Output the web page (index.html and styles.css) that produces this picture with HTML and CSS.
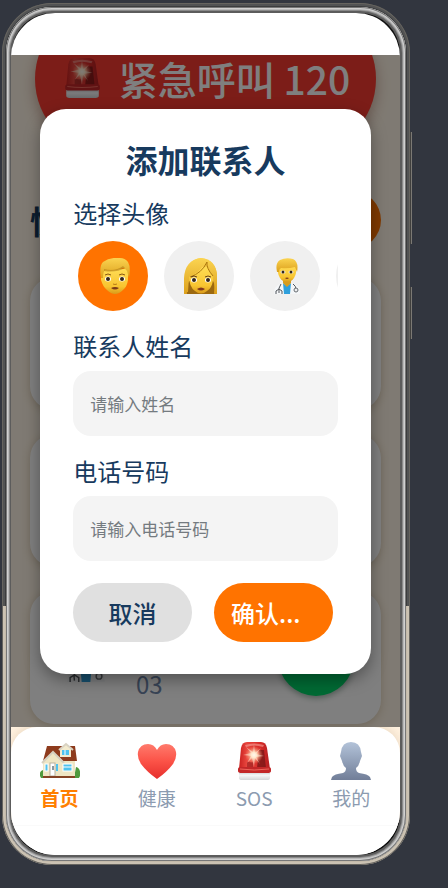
FILE: index.html
```
<!DOCTYPE html>
<html lang="zh-CN">
<head>
    <meta charset="UTF-8">
    <meta name="viewport" content="width=device-width, initial-scale=1.0">
    <title>添加联系人</title>
    <link rel="stylesheet" href="styles.css">
</head>
<body>
    <!-- Shared icons -->
    <svg class="sprite" aria-hidden="true">
        <defs>
            <linearGradient id="gRed" x1="0" x2="1" y1="0" y2="0">
                <stop offset="0" stop-color="#c9201f"/>
                <stop offset="0.25" stop-color="#e8463e"/>
                <stop offset="0.7" stop-color="#d62a27"/>
                <stop offset="1" stop-color="#b31f22"/>
            </linearGradient>
            <radialGradient id="gGlow">
                <stop offset="0" stop-color="#ffffff"/>
                <stop offset="0.3" stop-color="#ffe0c0"/>
                <stop offset="1" stop-color="#ff8a66" stop-opacity="0"/>
            </radialGradient>
            <linearGradient id="gBase" x1="0" x2="0" y1="0" y2="1">
                <stop offset="0" stop-color="#c9cccf"/>
                <stop offset="0.4" stop-color="#f6f7f8"/>
                <stop offset="1" stop-color="#d4d6d8"/>
            </linearGradient>
            <linearGradient id="gHair" x1="0" x2="0" y1="0" y2="1">
                <stop offset="0" stop-color="#fbd451"/>
                <stop offset="1" stop-color="#dca01c"/>
            </linearGradient>
            <linearGradient id="gFace" x1="0" x2="0" y1="0" y2="1">
                <stop offset="0" stop-color="#ffdc55"/>
                <stop offset="0.7" stop-color="#f8c531"/>
                <stop offset="1" stop-color="#d99a1b"/>
            </linearGradient>
            <linearGradient id="gHeart" x1="0" x2="0" y1="0" y2="1">
                <stop offset="0" stop-color="#ff7a6c"/>
                <stop offset="0.5" stop-color="#fb5247"/>
                <stop offset="1" stop-color="#e62f2d"/>
            </linearGradient>
            <linearGradient id="gUser" x1="0" x2="0" y1="0" y2="1">
                <stop offset="0" stop-color="#b3c3d9"/>
                <stop offset="1" stop-color="#717e98"/>
            </linearGradient>
        </defs>

        <symbol id="siren" viewBox="0 0 40 40">
            <path d="M5 28 7 7Q8 1 13 1h14q5 0 6 6l3 21z" fill="url(#gRed)"/>
            <path d="M25 9h5l2 18h-9z" fill="#6f1516" opacity="0.7"/>
            <path d="M13 27v-6h6v6z" fill="#84191a" opacity="0.5"/>
            <path d="M11 4Q20 1 30 4l-1 2Q20 3 12 6z" fill="#f5a198" opacity="0.6"/>
            <circle cx="20" cy="14" r="9" fill="url(#gGlow)"/>
            <path d="m20 3 1 9 6-5-5 6 8 2-8 1 4 7-5-6-1 9-2-9-5 5 4-7-8-1 8-2-5-6 7 5z" fill="#fff2dc" opacity="0.5"/>
            <path d="M5 31h31v6q0 2-3 2H8q-3 0-3-2z" fill="url(#gBase)"/>
            <path d="M4 28q0-2 3-2h27q3 0 3 2v2q0 2-4 2H8q-4 0-4-2z" fill="#c32728"/>
            <path d="M6 28q14 2 29 0" stroke="#ee665c" fill="none"/>
        </symbol>

        <symbol id="man" viewBox="0 0 36 36">
            <path d="M4 11h27v11q-1 7-5 10-4 4-8 4t-8-4q-4-3-6-10z" fill="url(#gFace)"/>
            <path d="M4 20Q2 8 6 4q7-5 17-4 5 0 8 4 3 5 1 16l-2-7q-1-2-4-3-9 4-18 2-2 2-2 8z" fill="url(#gHair)"/>
            <path d="M7 11q11 3 19-3l2 2q-9 5-21 3z" fill="#a87210" opacity="0.5"/>
            <path d="M8 17q3-2 6 0M22 17q3-2 6 0" stroke="#8a5a14" fill="none"/>
            <ellipse cx="11" cy="21" rx="3" ry="2.500" fill="#fff"/>
            <ellipse cx="25" cy="21" rx="3" ry="2.500" fill="#fff"/>
            <circle cx="11" cy="21" r="2" fill="#33261b"/>
            <circle cx="25" cy="21" r="2" fill="#33261b"/>
            <path d="M16 26q2 1 4 0" stroke="#b97c14" fill="none"/>
            <path d="M14 30q4-2 8 0-4 3-8 0z" fill="#7a3a17"/>
        </symbol>

        <symbol id="woman" viewBox="0 0 36 36">
            <path d="M1 36V20Q2 2 18 0q15 1 16 18v18z" fill="url(#gHair)"/>
            <path d="M4 36q-1-8 2-13h24q3 5 2 13z" fill="#9c6910"/>
            <path d="M6 17q5-1 12-8 5-1 7 1 5 4 5 12-1 8-6 11-6 5-12 0-6-4-6-16z" fill="url(#gFace)"/>
            <path d="M6 19Q18 14 23 3q-1 5 7 15 2 4 1 18l3-1V16Q32 2 18 0 5 1 3 16L1 35l4-1z" fill="url(#gHair)"/>
            <path d="M7 19Q19 15 24 4q-1 6 6 14" stroke="#ae780f" fill="none"/>
            <path d="M8 19q3-2 6 0M22 19q3-2 6 0" stroke="#67411a" fill="none"/>
            <ellipse cx="11" cy="22" rx="3" ry="2.500" fill="#fff"/>
            <ellipse cx="25" cy="22" rx="3" ry="2.500" fill="#fff"/>
            <circle cx="11" cy="22" r="2" fill="#33261b"/>
            <circle cx="25" cy="22" r="2" fill="#33261b"/>
            <path d="M14 31q4-3 8 0-4 3-8 0z" fill="#82371d"/>
        </symbol>

        <symbol id="doctor" viewBox="0 0 36 36">
            <path d="M5 36q0-8 6-10l7-2 7 2q6 2 6 10z" fill="#f4f6f8"/>
            <path d="m14 25 4 3 4-3-1 11h-6z" fill="#2f9fdb"/>
            <path d="M14 20h8v5l-4 4-4-4z" fill="#d79c1e"/>
            <path d="M9 8h18v7q-1 5-5 8-4 2-8 0-4-3-5-8z" fill="url(#gFace)"/>
            <path d="M8 14Q6 5 11 2q6-3 13-1 6 3 4 13l-2-5q-7 2-14 1-2 1-2 4z" fill="url(#gHair)"/>
            <ellipse cx="14" cy="14" rx="2.500" ry="1.500" fill="#fff"/>
            <ellipse cx="22" cy="14" rx="2.500" ry="1.500" fill="#fff"/>
            <circle cx="14" cy="14" r="1.500" fill="#33261b"/>
            <circle cx="22" cy="14" r="1.500" fill="#33261b"/>
            <path d="M16 20q2-1 4 0-2 2-4 0z" fill="#7a3a17"/>
            <path d="M12 26q-3 4-2 9M24 26q3 2 3 5M7 36v-3l3-2 3 2v3" stroke="#52575c" fill="none"/>
            <circle cx="27" cy="32" r="2" fill="#eef0f2" stroke="#686d72"/>
        </symbol>
    </svg>

    <div class="phone">
        <span class="side-key side-key-volume"></span>
        <span class="side-key side-key-power"></span>
        <div class="bezel">
        <div class="screen">
            <div class="status-bar"></div>

            <main class="app">
                <div class="page">
                    <button type="button" class="sos-button">
                        <svg class="sos-icon" aria-hidden="true"><use href="#siren"/></svg>
                        紧急呼叫 120
                    </button>

                    <div class="section-header">
                        <h2>快</h2>
                        <button type="button" class="add-button" aria-label="添加"></button>
                    </div>

                    <div class="contact-list">
                        <div class="contact-card"></div>
                        <div class="contact-card"></div>
                        <div class="contact-card">
                            <svg class="contact-icon" aria-hidden="true"><use href="#doctor"/></svg>
                            <span class="contact-phone">03</span>
                            <button type="button" class="call-button" aria-label="呼叫"></button>
                        </div>
                    </div>
                </div>

                <div class="overlay">
                    <form class="modal">
                        <h1>添加联系人</h1>

                        <fieldset class="avatar-field">
                            <legend>选择头像</legend>
                            <div class="avatar-list">
                                <label class="avatar">
                                    <input type="radio" name="avatar" aria-label="男士" checked>
                                    <svg aria-hidden="true"><use href="#man"/></svg>
                                </label>
                                <label class="avatar">
                                    <input type="radio" name="avatar" aria-label="女士">
                                    <svg aria-hidden="true"><use href="#woman"/></svg>
                                </label>
                                <label class="avatar">
                                    <input type="radio" name="avatar" aria-label="医生">
                                    <svg aria-hidden="true"><use href="#doctor"/></svg>
                                </label>
                                <label class="avatar">
                                    <input type="radio" name="avatar" aria-label="其他">
                                </label>
                            </div>
                        </fieldset>

                        <div class="form-group">
                            <label for="contactName">联系人姓名</label>
                            <input type="text" id="contactName" placeholder="请输入姓名">
                        </div>

                        <div class="form-group">
                            <label for="contactPhone">电话号码</label>
                            <input type="tel" id="contactPhone" placeholder="请输入电话号码">
                        </div>

                        <div class="modal-actions">
                            <button type="button" class="btn btn-cancel">取消</button>
                            <button type="submit" class="btn btn-confirm">确认...</button>
                        </div>
                    </form>
                </div>
            </main>

            <div class="tab-wrap">
                <nav class="tab-bar">
                    <a href="#home" class="tab active">
                        <svg viewBox="0 0 40 40" aria-hidden="true">
                            <path d="M0 35q-1-5 3-6l3 8H1zM40 35q1-8-4-9l-2 11h5z" fill="#4f9a3d"/>
                            <path d="M3 20 13 12h22v24H3z" fill="#efe6c4"/>
                            <path d="M7 5h28l2 15H23L13 11 3 20z" fill="#8e3b1d"/>
                            <path d="M20 8 26 3l5 5v8H20z" fill="#f3ebce"/>
                            <path d="m19 9 7-6 7 6" stroke="#d9d3c3" stroke-width="2" fill="none"/>
                            <path d="m2 22 11-11 11 11" stroke="#d6d0c0" stroke-width="2" fill="none"/>
                            <rect x="22" y="9" width="7" height="5" fill="#4ec2ee"/>
                            <rect x="23" y="23" width="9" height="7" fill="#4ec2ee" stroke="#fff"/>
                            <path d="M23 26h9M25 9v5" stroke="#fff"/>
                            <rect x="5" y="23" width="3" height="7" fill="#4ec2ee" stroke="#fff"/>
                            <rect x="10" y="22" width="5" height="13" fill="#fff" stroke="#b9b1a0"/>
                            <rect x="12" y="25" width="2" height="4" fill="#8b98a0"/>
                            <rect x="16" y="23" width="2" height="7" fill="#4ec2ee"/>
                            <path d="M3 35h32v2H3z" fill="#854324"/>
                        </svg>
                        <span>首页</span>
                    </a>
                    <a href="#health" class="tab">
                        <svg viewBox="0 0 40 40" aria-hidden="true">
                            <path d="M20 38Q10 31 4 23 0 17 1 11 3 3 11 3q6 0 9 6 3-6 9-6 8 0 10 8 1 6-3 12-6 8-16 15z" fill="url(#gHeart)"/>
                        </svg>
                        <span>健康</span>
                    </a>
                    <a href="#sos" class="tab">
                        <svg aria-hidden="true"><use href="#siren"/></svg>
                        <span>SOS</span>
                    </a>
                    <a href="#me" class="tab">
                        <svg viewBox="0 0 40 40" aria-hidden="true">
                            <path d="M20 1q9 0 10 10l1 4-2 5q-1 5-4 7 0 4 3 5 9 1 11 4l1 3H0l1-3q2-3 11-4 3-1 3-5-3-2-4-7l-2-5 1-4Q11 1 20 1z" fill="url(#gUser)"/>
                        </svg>
                        <span>我的</span>
                    </a>
                </nav>
            </div>
            <div class="home-area"></div>
        </div>
        </div>
    </div>
</body>
</html>
```

FILE: styles.css
```
/* General Styling */
* {
    box-sizing: border-box;
}

body {
    font-family: "Noto Sans CJK SC", sans-serif;
    background: #32363f;
    color: #173a5e;
    display: flex;
    height: 100vh;
    margin: 0;
    padding: 3px 38px 23px 2px;
}

h1, h2, fieldset, legend {
    margin: 0;
    padding: 0;
    border: none;
}

button, input {
    font-family: inherit;
    border: none;
}

button {
    cursor: pointer;
}

.sprite {
    position: absolute;
    width: 0;
    height: 0;
}

/* Phone frame */
.phone {
    position: relative;
    flex: 1;
    min-width: 0;
    display: flex;
    padding: 4px;
    border-radius: 50px;
    background: linear-gradient(to bottom, #3b3c3d 0 70%, #c4baa9 70%);
    box-shadow: inset 0 0 0 1px #66645f, inset 0 0 0 3px rgba(255, 255, 255, 0.12);
}

.bezel {
    flex: 1;
    min-width: 0;
    display: flex;
    padding: 6px 6px 6px 5px;
    border-radius: 46px;
    background: #111;
    box-shadow: inset 0 0 0 1px #777, inset 0 0 0 2px #d0d0d0, inset 0 0 0 3px #b8b8b8, inset 0 0 0 4px #8a8a8a, inset 0 0 0 6px #5c5c5c;
}

.side-key {
    position: absolute;
    left: 100%;
    width: 2px;
    background: linear-gradient(to right, #222, #99968f);
}

.side-key-volume {
    top: 15%;
    height: 13%;
}

.side-key-power {
    top: 33%;
    height: 6%;
}

.screen {
    flex: 1;
    min-width: 0;
    display: flex;
    flex-direction: column;
    border-radius: 44px;
    overflow: hidden;
    background: #ffffff;
}

.status-bar {
    flex: none;
    height: 42px;
}

/* Home page, scrolled to its end */
.app {
    position: relative;
    flex: 1;
    min-height: 0;
    display: flex;
    flex-direction: column;
    justify-content: flex-end;
    overflow: hidden;
    background: #fff5e6;
}

.page {
    padding: 0 19px 3px;
}

.sos-button {
    display: flex;
    align-items: center;
    justify-content: center;
    gap: 16px;
    width: calc(100% - 10px);
    height: 150px;
    margin: 0 5px;
    padding: 0 0 3px;
    border-radius: 75px;
    background: #f83b31;
    color: #ffffff;
    font-size: 39px;
    line-height: 48px;
    font-weight: 500;
    white-space: nowrap;
    box-shadow: 0 6px 14px rgba(120, 50, 30, 0.4);
}

.sos-icon {
    width: 42px;
    height: 44px;
}

.section-header {
    display: flex;
    align-items: center;
    justify-content: space-between;
    margin: 37px 0 28px;
}

.section-header h2 {
    font-size: 32px;
    line-height: 40px;
}

.add-button {
    width: 100px;
    height: 58px;
    border-radius: 29px;
    background: #ff7300;
}

.contact-list {
    display: flex;
    flex-direction: column;
    gap: 24px;
}

.contact-card {
    display: flex;
    align-items: center;
    height: 133px;
    padding: 0 27px 0 30px;
    border-radius: 24px;
    background: #ffffff;
    box-shadow: 0 2px 8px rgba(120, 90, 40, 0.25);
}

.contact-icon {
    width: 52px;
    height: 52px;
    margin-bottom: 4px;
}

.contact-phone {
    flex: 1;
    margin-left: 24px;
    padding-top: 52px;
    color: #7088ad;
    font-size: 24px;
    line-height: 28px;
}

.call-button {
    width: 76px;
    height: 76px;
    border-radius: 50%;
    background: #00d468;
    box-shadow: 0 2px 6px rgba(0, 60, 30, 0.4);
}

/* Modal */
.overlay {
    position: absolute;
    inset: 0;
    display: flex;
    align-items: center;
    justify-content: center;
    background: rgba(0, 0, 0, 0.5);
}

.modal {
    width: 85%;
    padding: 32px 33px;
    border-radius: 26px;
    background: #ffffff;
    box-shadow: 0 6px 16px rgba(0, 0, 0, 0.35);
}

.modal h1 {
    margin-bottom: 22px;
    font-size: 32px;
    line-height: 36px;
    text-align: center;
}

.avatar-field {
    min-width: 0;
}

.modal legend,
.form-group label {
    display: block;
    font-size: 24px;
    line-height: 28px;
}

.avatar-list {
    display: flex;
    gap: 16px;
    margin-top: 14px;
    padding-left: 5px;
    overflow: hidden;
}

.avatar {
    flex: none;
    display: flex;
    align-items: center;
    justify-content: center;
    width: 70px;
    height: 70px;
    padding-left: 4px;
    border-radius: 50%;
    background: #f0f0f0;
    cursor: pointer;
}

.avatar:has(input:checked) {
    background: #ff7300;
}

.avatar input {
    appearance: none;
    width: 0;
    height: 0;
    margin: 0;
}

.avatar svg {
    width: 36px;
    height: 36px;
}

.form-group {
    margin-top: 21px;
}

.form-group input {
    display: block;
    width: 100%;
    height: 65px;
    margin-top: 11px;
    padding: 0 17px;
    border-radius: 18px;
    background: #f4f4f4;
    color: #173a5e;
    font-size: 17px;
}

.form-group input::placeholder {
    color: #747b80;
}

.modal-actions {
    display: flex;
    gap: 22px;
    margin-top: 22px;
    padding-right: 5px;
}

.btn {
    flex: 1;
    min-width: 0;
    height: 59px;
    padding: 0 17px;
    border-radius: 30px;
    font-size: 24px;
    font-weight: 500;
}

.btn-cancel {
    background: #e0e0e0;
    color: #173a5e;
}

.btn-confirm {
    background: #ff7300;
    color: #ffffff;
    text-align: left;
}

/* Tab bar */
.tab-wrap {
    flex: none;
    background: #fff1df;
}

.tab-bar {
    display: flex;
    height: 98px;
    padding-top: 14px;
    border-radius: 26px 26px 0 0;
    background: #ffffff;
    box-shadow: 0 -2px 8px rgba(120, 90, 40, 0.15);
}

.tab {
    flex: 1;
    display: flex;
    flex-direction: column;
    align-items: center;
    gap: 2px;
    color: #8c9bb0;
    font-size: 19px;
    line-height: 30px;
    text-decoration: none;
}

.tab svg {
    width: 40px;
    height: 40px;
}

.tab.active {
    color: #ff7f00;
    font-weight: bold;
}

.home-area {
    flex: none;
    height: 30px;
    border-top: 1px solid #fafafa;
    background: #ffffff;
}
```
